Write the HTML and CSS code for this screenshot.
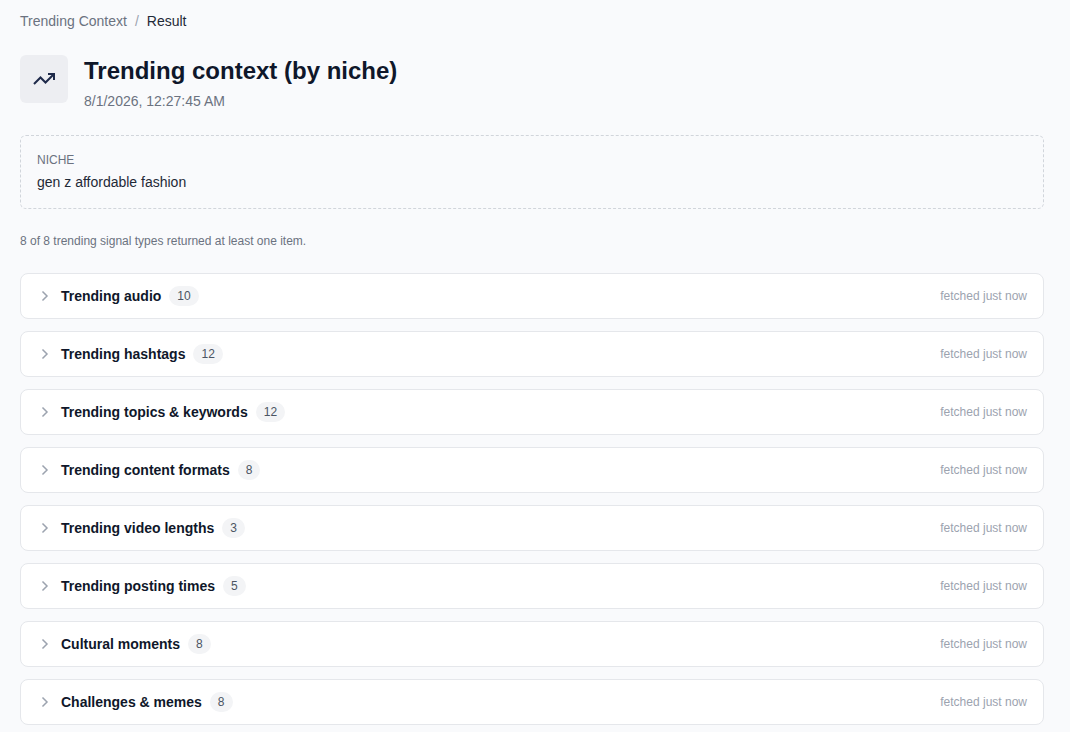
FILE: index.html
```html
<!DOCTYPE html>
<html lang="en">
<head>
  <meta charset="UTF-8">
  <meta name="viewport" content="width=device-width, initial-scale=1">
  <title>Trending context</title>
  <link rel="stylesheet" href="styles.css">
</head>
<body>

<!-- shared row chevron -->
<svg class="sprite" width="0" height="0" aria-hidden="true">
  <symbol id="chevron" viewBox="0 0 16 16">
    <path d="M6 4l4 4-4 4"/>
  </symbol>
</svg>

<main class="page">

  <nav class="breadcrumb" aria-label="Breadcrumb">
    <a href="#">Trending Context</a>
    <span class="sep">/</span>
    <span class="current">Result</span>
  </nav>

  <header class="header">
    <div class="header-icon">
      <svg viewBox="0 0 24 24" width="24" height="24" aria-hidden="true">
        <path d="M22 7l-8.500 8.500-5-5L2 17"/>
        <path d="M16 7h6v6"/>
      </svg>
    </div>
    <div class="header-text">
      <h1>Trending context (by niche)</h1>
      <p>8/1/2026, 12:27:45 AM</p>
    </div>
  </header>

  <section class="niche">
    <h2>Niche</h2>
    <p>gen z affordable fashion</p>
  </section>

  <p class="summary">8 of 8 trending signal types returned at least one item.</p>

  <div class="signals">
    <button class="signal" type="button" aria-expanded="false">
      <svg class="chevron" aria-hidden="true"><use href="#chevron"/></svg>
      <span class="name">Trending audio</span>
      <span class="count">10</span>
      <span class="fetched">fetched just now</span>
    </button>
    <button class="signal" type="button" aria-expanded="false">
      <svg class="chevron" aria-hidden="true"><use href="#chevron"/></svg>
      <span class="name">Trending hashtags</span>
      <span class="count">12</span>
      <span class="fetched">fetched just now</span>
    </button>
    <button class="signal" type="button" aria-expanded="false">
      <svg class="chevron" aria-hidden="true"><use href="#chevron"/></svg>
      <span class="name">Trending topics &amp; keywords</span>
      <span class="count">12</span>
      <span class="fetched">fetched just now</span>
    </button>
    <button class="signal" type="button" aria-expanded="false">
      <svg class="chevron" aria-hidden="true"><use href="#chevron"/></svg>
      <span class="name">Trending content formats</span>
      <span class="count">8</span>
      <span class="fetched">fetched just now</span>
    </button>
    <button class="signal" type="button" aria-expanded="false">
      <svg class="chevron" aria-hidden="true"><use href="#chevron"/></svg>
      <span class="name">Trending video lengths</span>
      <span class="count">3</span>
      <span class="fetched">fetched just now</span>
    </button>
    <button class="signal" type="button" aria-expanded="false">
      <svg class="chevron" aria-hidden="true"><use href="#chevron"/></svg>
      <span class="name">Trending posting times</span>
      <span class="count">5</span>
      <span class="fetched">fetched just now</span>
    </button>
    <button class="signal" type="button" aria-expanded="false">
      <svg class="chevron" aria-hidden="true"><use href="#chevron"/></svg>
      <span class="name">Cultural moments</span>
      <span class="count">8</span>
      <span class="fetched">fetched just now</span>
    </button>
    <button class="signal" type="button" aria-expanded="false">
      <svg class="chevron" aria-hidden="true"><use href="#chevron"/></svg>
      <span class="name">Challenges &amp; memes</span>
      <span class="count">8</span>
      <span class="fetched">fetched just now</span>
    </button>
  </div>

</main>

</body>
</html>
```
FILE: styles.css
```css
* {
  box-sizing: border-box;
  margin: 0;
  padding: 0;
}

body {
  background-color: #f9fafc;
  color: #0f172a;
  font-family: "Liberation Sans", Arial, sans-serif;
  font-size: 14px;
  line-height: 20px;
}

.sprite {
  position: absolute;
}

.page {
  padding: 11px 26px 7px 20px;
}

/* breadcrumb */
.breadcrumb {
  display: flex;
  gap: 8px;
  margin-bottom: 24px;
}

.breadcrumb a {
  color: #6b7280;
  text-decoration: none;
}

.breadcrumb a:hover {
  text-decoration: underline;
}

.breadcrumb .sep {
  color: #9ca3af;
}

.breadcrumb .current {
  color: #1f2937;
}

/* title */
.header {
  display: flex;
  gap: 16px;
  margin-bottom: 24px;
}

.header-icon {
  display: flex;
  flex: none;
  align-items: center;
  justify-content: center;
  width: 48px;
  height: 48px;
  border-radius: 6px;
  background-color: #edeef2;
}

.header-icon svg {
  fill: none;
  stroke: #1e2a4a;
  stroke-width: 2;
}

.header h1 {
  font-size: 24px;
  line-height: 32px;
}

.header p {
  margin-top: 4px;
  color: #6b7280;
}

/* niche box */
.niche {
  padding: 16px;
  margin-bottom: 24px;
  border: 1px dashed #d1d5db;
  border-radius: 6px;
}

.niche h2 {
  margin-bottom: 4px;
  color: #6b7280;
  font-size: 12px;
  font-weight: normal;
  line-height: 16px;
  text-transform: uppercase;
}

.niche p {
  color: #1f2937;
}

.summary {
  margin-bottom: 24px;
  color: #6b7280;
  font-size: 12px;
  line-height: 16px;
}

/* signal rows */
.signals {
  display: flex;
  flex-direction: column;
  gap: 12px;
}

.signal {
  display: flex;
  align-items: center;
  gap: 8px;
  width: 100%;
  padding: 12px 16px;
  border: 1px solid #e5e7eb;
  border-radius: 8px;
  background-color: #fff;
  color: inherit;
  font: inherit;
  text-align: left;
  cursor: pointer;
}

.signal:hover {
  background-color: #f9fafb;
}

.chevron {
  flex: none;
  width: 16px;
  height: 16px;
  fill: none;
  stroke: #9ca3af;
  stroke-width: 1.5;
  stroke-linecap: square;
}

.name {
  font-weight: bold;
}

.count {
  padding: 2px 8px;
  border-radius: 10px;
  background-color: #f3f4f6;
  color: #4b5563;
  font-size: 12px;
  line-height: 16px;
}

.fetched {
  margin-left: auto;
  color: #9ca3af;
  font-size: 12px;
  line-height: 16px;
}
```
